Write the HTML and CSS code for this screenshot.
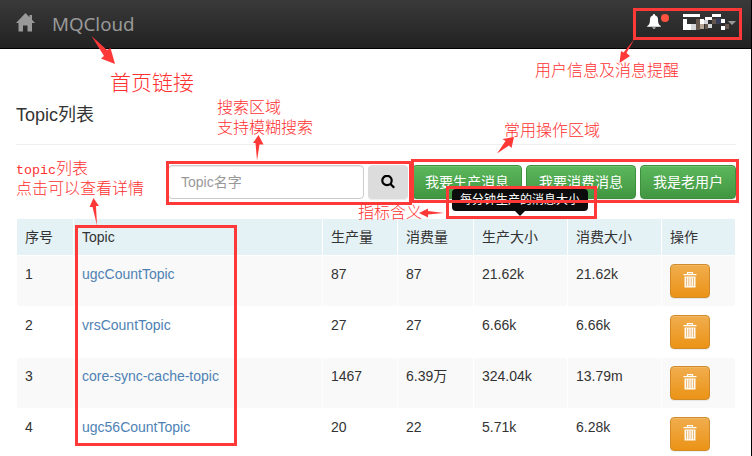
FILE: index.html
```html
<!DOCTYPE html>
<html lang="zh-CN">
<head>
<meta charset="utf-8">
<title>MQCloud</title>
<link rel="stylesheet" href="styles.css">
</head>
<body>
<svg class="defs" width="0" height="0">
  <symbol id="trash" viewBox="0 0 14 16">
    <path d="M4.500 2V.600h5V2M.500 2.600h13" fill="none" stroke="#fff" stroke-width="1.200"/>
    <path d="M1.500 4.500h11V15.500h-11z" fill="#fffaf0"/>
    <path d="M3.500 5.500v8.600M5.800 5.500v8.600M8.200 5.500v8.600M10.500 5.500v8.600" stroke="#e9ab62" stroke-width=".8"/>
  </symbol>
</svg>
<header class="navbar">
  <svg class="home" width="19" height="19" viewBox="0 0 19 19"><path d="M9.500 0 0 10h2.500v8.500H7V12.500h4.500v6H16V10h3l-3-3.200V2h-2.500v2.200z"/></svg>
  <a class="brand">MQCloud</a>
  <div class="user">
    <svg class="bell" width="14" height="16" viewBox="0 0 14 16"><path d="M7 0c.7 0 1 .5 1 1.200 2 .6 3 2.300 3 4.300 0 3.300.5 5.200 2.800 6.500v.8H.2V12C2.500 10.700 3 8.800 3 5.500c0-2 1-3.700 3-4.300C6 .5 6.300 0 7 0zM5.300 13.500h3.400c0 1.500-3.400 1.500-3.400 0z"/></svg>
    <i class="dot"></i>
    <svg class="mosaic" width="46" height="16" viewBox="0 0 46 16" shape-rendering="crispEdges">
      <path fill="#fff" d="M0 0h17v3H0zM29 0h9v3h-9zM0 5h4v11H0zM4 10h9v6H4zM17 5h4v5h-4zM22 3h7v3h-7zM38 5h4v4h-4zM38 12h4v4h-4z"/>
      <path fill="#d5d7da" d="M8 10h5v6H8zM21 6h4v4h-4zM25 10h4v4h-4z"/>
      <path fill="#66574e" d="M13 5h4v4h-4zM13 9h4v7h-4zM22 10h3v5h-3zM29 5h4v5h-4zM42 10h4v5h-4z"/>
      <path fill="#b7a797" d="M17 10h4v5h-4z"/><path fill="#373d54" d="M33 4h5v6h-5z"/>
    </svg>
    <i class="caret"></i>
  </div>
</header>
<main class="page">
  <h4 class="title">Topic列表</h4>
  <div class="toolbar">
    <input class="search" placeholder="Topic名字">
    <button class="btn btn-search"><svg width="14" height="14" viewBox="0 0 14 14"><circle cx="6" cy="5.500" r="4.700"/><path d="m9.200 8.800 4 4"/></svg></button>
    <button class="btn btn-green">我要生产消息</button>
    <button class="btn btn-green">我要消费消息</button>
    <button class="btn btn-green">我是老用户</button>
  </div>
  <table class="topics">
    <colgroup><col class="c1"><col class="c2"><col class="c3"><col class="c4"><col class="c5"><col class="c6"><col class="c7"></colgroup>
    <thead><tr><th>序号</th><th>Topic</th><th>生产量</th><th>消费量</th><th>生产大小</th><th>消费大小</th><th>操作</th></tr></thead>
    <tbody>
      <tr><td>1</td><td><a>ugcCountTopic</a></td><td>87</td><td>87</td><td>21.62k</td><td>21.62k</td><td><button class="btn btn-del"><svg width="14" height="16"><use href="#trash"/></svg></button></td></tr>
      <tr><td>2</td><td><a>vrsCountTopic</a></td><td>27</td><td>27</td><td>6.66k</td><td>6.66k</td><td><button class="btn btn-del"><svg width="14" height="16"><use href="#trash"/></svg></button></td></tr>
      <tr><td>3</td><td><a>core-sync-cache-topic</a></td><td>1467</td><td>6.39万</td><td>324.04k</td><td>13.79m</td><td><button class="btn btn-del"><svg width="14" height="16"><use href="#trash"/></svg></button></td></tr>
      <tr><td>4</td><td><a>ugc56CountTopic</a></td><td>20</td><td>22</td><td>5.71k</td><td>6.28k</td><td><button class="btn btn-del"><svg width="14" height="16"><use href="#trash"/></svg></button></td></tr>
    </tbody>
  </table>
</main>
<div class="tooltip">每分钟生产的消息大小</div>
<div class="frame frame-user"></div>
<div class="frame frame-search"></div>
<div class="frame frame-actions"></div>
<div class="frame frame-tip"></div>
<div class="frame frame-topic"></div>
<svg class="arrows" width="752" height="456" viewBox="0 0 752 456">
  <path d="M91.500 36 107 50l3.500-2L115 64l-14-5.500 3-2.500zM634.500 39l-8 14 3.500 3-10.500 7 1.500-12 2.500 1.500zM257 160.500l-1.500-17.500H253l5.500-8 5 9.500h-4zM497 153.500l8.500-12.500-3-2L514 137l-2.500 11-2.500-2.500zM444 213l-16 1.500v3l-9-4.500 9-4.500v2.500zM97 225.500 92.500 207H89.500l4-9 5.500 8h-3z"/>
</svg>
<div class="note note-home">首页链接</div>
<div class="note note-user">用户信息及消息提醒</div>
<div class="note note-search">搜索区域<br>支持模糊搜索</div>
<div class="note note-actions">常用操作区域</div>
<div class="note note-topic"><div class="line"><span class="mono">topic</span>列表</div><div class="line">点击可以查看详情</div></div>
<div class="note note-tip">指标含义</div>
</body>
</html>
```
FILE: styles.css
```css
* { box-sizing: border-box; }
body {
  margin: 0;
  width: 752px;
  height: 456px;
  overflow: hidden;
  position: relative;
  background: #fff;
  border-right: 1px solid #000;
  color: #333;
  font: 14px/20px "Liberation Sans", "Noto Sans CJK SC", sans-serif;
}
.defs { position: absolute; }
.navbar {
  height: 49px;
  padding: 0 15px 0 16px;
  display: flex;
  align-items: center;
  background: linear-gradient(#3a3a3a, #222);
  border-bottom: 1px solid #000;
}
.home { fill: #999; margin-top: -4px; }
.brand { margin-left: 17px; font: 18.7px/24px "Noto Sans", sans-serif; color: #999; }
.user { margin-left: auto; display: flex; align-items: flex-start; height: 21px; }
.bell { fill: #fff; }
.dot { width: 8px; height: 8px; border-radius: 50%; background: #ff5340; }
.mosaic { margin-left: 14px; }
.caret { margin: 7px 0 0 -1px; border: 4px solid transparent; border-top-color: #999; border-bottom: 0; }
.page { padding: 55px 15px 0 17px; }
.title {
  margin: 0 0 0 -1px;
  height: 41px;
  border-bottom: 1px solid #eee;
  font-size: 18px;
  line-height: 22px;
  font-weight: 400;
}
.toolbar { margin-top: 20px; display: flex; justify-content: flex-end; gap: 4px; }
.search {
  width: 196px;
  height: 34px;
  padding: 6px 12px;
  border: 1px solid #ccc;
  border-radius: 4px;
  font: inherit;
  box-shadow: inset 0 1px 1px rgba(0, 0, 0, .075);
}
.search::placeholder { color: #999; }
.btn {
  height: 34px;
  margin: 0;
  padding: 0 12px;
  border: 1px solid;
  border-radius: 4px;
  font: inherit;
  white-space: nowrap;
  box-shadow: inset 0 1px 0 rgba(255, 255, 255, .15), 0 1px 1px rgba(0, 0, 0, .075);
}
.btn svg { display: block; }
.btn-search { width: 40px; background: #dcdcdc; border-color: #dcdcdc; }
.btn-search svg { fill: none; stroke: #000; stroke-width: 2.2; }
.btn-green { color: #fff; background: linear-gradient(#5cb85c, #419641); border-color: #3e8f3e; }
.btn-del {
  width: 40px;
  padding-bottom: 3px;
  display: block;
  background: linear-gradient(#f0ad4e, #eb9316);
  border-color: #d08a27;
}
.topics { width: 719px; margin-top: 20px; table-layout: fixed; border-collapse: separate; border-spacing: 0; }
.c1 { width: 57px; }
.c2 { width: 249px; }
.c3 { width: 75px; }
.c4 { width: 76px; }
.c5 { width: 94px; }
.c6 { width: 94px; }
.c7 { width: 74px; }
.topics th, .topics td { padding: 8px; text-align: left; vertical-align: top; font-weight: 400; border-right: 1px solid #fff; }
.topics th { background: #e4f1f5; }
.topics td { border-top: 1px solid #fff; }
.topics tbody tr:nth-child(odd) { background: #f9f9f9; }
.topics a { color: #4e82b4; }
.tooltip {
  position: absolute;
  left: 452px;
  top: 189px;
  width: 136px;
  height: 22px;
  border-radius: 4px;
  background: #0c0c0c;
  color: #fff;
  font-size: 12px;
  line-height: 22px;
  text-align: center;
}
.tooltip::after {
  content: "";
  position: absolute;
  left: 63px;
  top: 22px;
  border: 5px solid transparent;
  border-top-color: #0c0c0c;
  border-bottom: 0;
}
.frame { position: absolute; border: 3px solid #ff3838; }
.frame-user { left: 633px; top: 8px; width: 109px; height: 32px; }
.frame-search { left: 166px; top: 161px; width: 246px; height: 44px; }
.frame-actions { left: 411px; top: 159px; width: 328px; height: 44px; }
.frame-tip { left: 446px; top: 186px; width: 151px; height: 33px; }
.frame-topic { left: 75px; top: 225px; width: 162px; height: 221px; }
.arrows { position: absolute; left: 0; top: 0; fill: #ff3838; }
.note { position: absolute; color: #ff3030; font-size: 16px; font-weight: 300; white-space: nowrap; }
.note-home { left: 110px; top: 70px; font-size: 21px; line-height: 26px; }
.note-user { left: 535px; top: 61px; }
.note-search { left: 217px; top: 98px; }
.note-actions { left: 504px; top: 121px; }
.note-topic { left: 16px; top: 159px; }
.note-tip { left: 358px; top: 203px; }
.line { height: 20px; line-height: 20px; }
.mono { font-family: "Liberation Mono", monospace; font-size: 13.33px; }
```
